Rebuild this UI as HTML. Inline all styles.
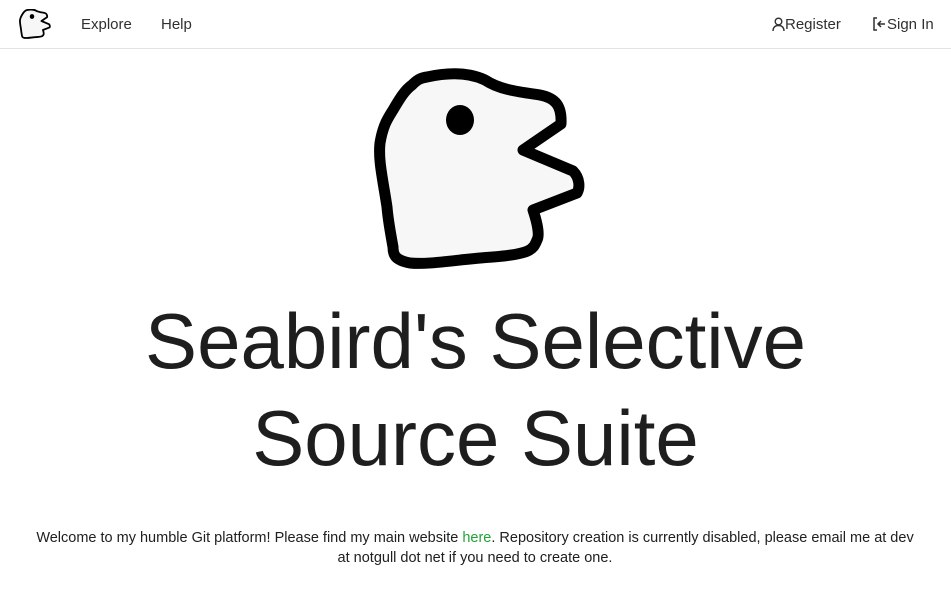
<!DOCTYPE html>
<html><head><meta charset="utf-8"><style>
html,body{margin:0;padding:0;background:#fff;width:951px;height:596px;overflow:hidden;font-family:"Liberation Sans",sans-serif;color:#202020}
.nav{height:48px;border-bottom:1px solid #e2e2e2;position:relative;font-size:15px;color:#303030}
.nav span{position:absolute;top:16px}
h1{margin:0;position:absolute;top:293px;left:0;width:951px;text-align:center;font-weight:400;font-size:78px;line-height:97px;color:#1e1e1e}
p{position:absolute;top:528px;left:35px;width:880px;margin:0;text-align:center;font-size:14.5px;line-height:20px;color:#202020}
a{color:#22a33a;text-decoration:none}
</style></head><body>
<div class="nav">
<svg style="position:absolute;left:19px;top:9px" width="32" height="30" viewBox="375 70 210 200"><path d="M427,77 C450,72 470,73 485,80 C500,90 520,92 540,95 C555,98 562,105 561,124 L523,150 L573,171 C580,178 580,188 577,193 L533,210 C537,222 540,235 537,240 C533,250 530,254 493,257 C460,259 430,265 410,263 C395,260 393,255 393,247 C390,230 388,220 387,207 C383,180 378,160 380,143 C383,125 388,118 393,110 C400,98 405,90 412,85 C417,80 420,78 427,77Z" fill="#f7f7f7" stroke="#000" stroke-width="12" stroke-linejoin="round"/><ellipse cx="460" cy="120" rx="15" ry="16"/></svg>
<span style="left:81px">Explore</span>
<span style="left:161px">Help</span>
<span style="left:772px"><svg width="13" height="14" viewBox="0 0 13 14" style="vertical-align:-2px"><circle cx="6.5" cy="4.5" r="3.3" fill="none" stroke="#303030" stroke-width="1.4"/><path d="M1,14 C1,10 3.5,8.5 6.5,8.5 C9.5,8.5 12,10 12,14" fill="none" stroke="#303030" stroke-width="1.4"/></svg>Register</span>
<span style="left:873px"><svg width="14" height="14" viewBox="0 0 14 14" style="vertical-align:-2px"><path d="M4,1 H1 V13 H4 M12,7 H5 M8,4 L5,7 L8,10" fill="none" stroke="#303030" stroke-width="1.5"/></svg>Sign In</span>
</div>
<svg style="position:absolute;left:0;top:0" width="951" height="300" viewBox="0 0 951 300"><path d="M427,77 C450,72 470,73 485,80 C500,90 520,92 540,95 C555,98 562,105 561,124 L523,150 L573,171 C580,178 580,188 577,193 L533,210 C537,222 540,235 537,240 C533,250 530,254 493,257 C460,259 430,265 410,263 C395,260 393,255 393,247 C390,230 388,220 387,207 C383,180 378,160 380,143 C383,125 388,118 393,110 C400,98 405,90 412,85 C417,80 420,78 427,77Z" fill="#f7f7f7" stroke="#000" stroke-width="11" stroke-linejoin="round"/><ellipse cx="460" cy="120" rx="14" ry="15"/></svg>
<h1>Seabird's Selective<br>Source Suite</h1>
<p>Welcome to my humble Git platform! Please find my main website <a>here</a>. Repository creation is currently disabled, please email me at dev at notgull dot net if you need to create one.</p>
</body></html>
